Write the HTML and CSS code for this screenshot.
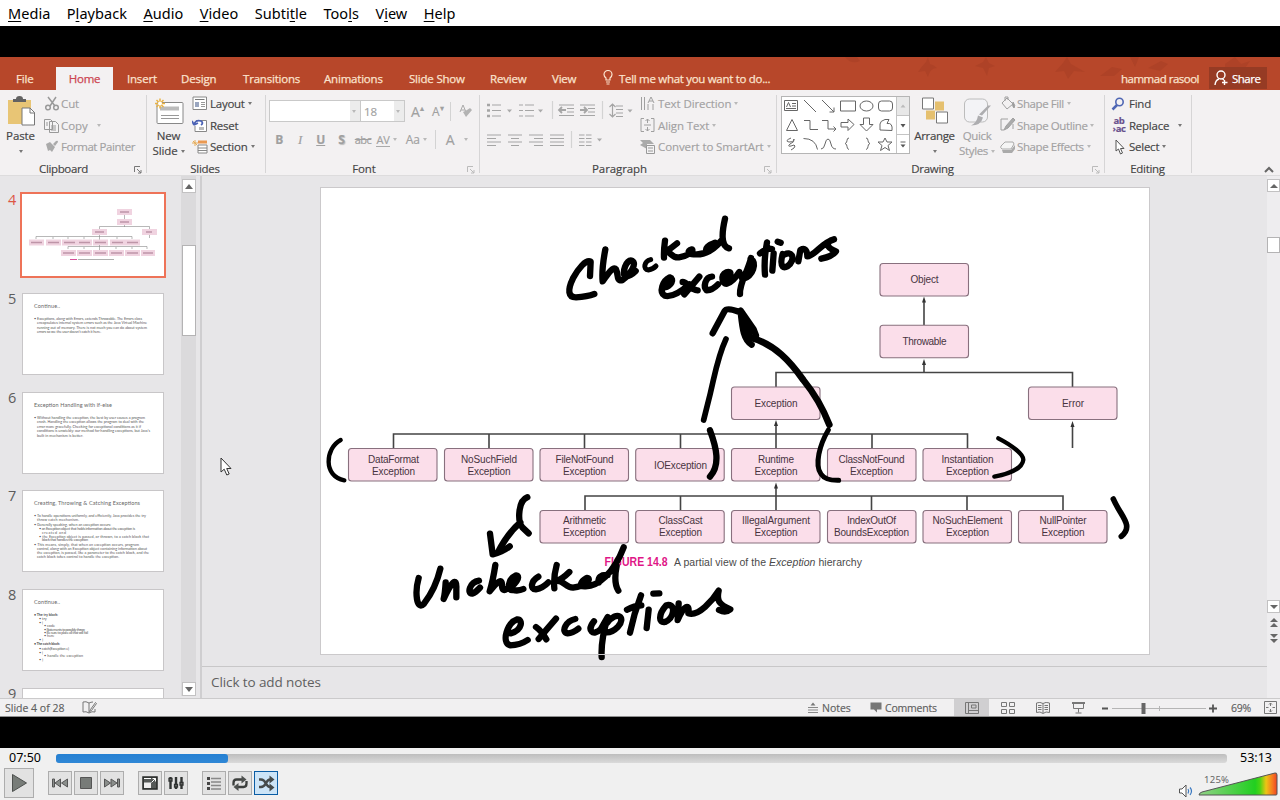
FILE: index.html
```html
<!DOCTYPE html>
<html lang="en">
<head>
<meta charset="utf-8">
<title>VLC media player</title>
<link rel="stylesheet" href="styles.css">
</head>
<body>
<nav class="menubar"><span><u>M</u>edia</span><span>P<u>l</u>ayback</span><span><u>A</u>udio</span><span><u>V</u>ideo</span><span>Subti<u>t</u>le</span><span>Too<u>l</u>s</span><span>V<u>i</u>ew</span><span><u>H</u>elp</span></nav>

<main class="video">
<header class="tabs">
  <svg class="leaves" width="560" height="33" viewBox="720 57 560 33"><g fill="#9f3b24" opacity=".4"><path d="M845 57q6 8 15 4l-3-4zM918 72q4-6 8-10l2-5 2 7q4 1 7 4-7 0-9 9l-3-6zM975 66l8-4 3-5 3 6 6 3-6 2-2 8-4-8zM1055 72l8-9 4-6 4 7 14 8-11-1-6 8-4-8zM1100 76l12-9 10 2-8 7zM1130 57l5 10 4-10zM1148 68l13-7 7 3-8 7zM1225 64l10-7 6 7 9-3-5 7-20 0z"/></g></svg>
  <span class="tab file">File</span><span class="tab home">Home</span><span class="tab t3">Insert</span><span class="tab t4">Design</span><span class="tab t5">Transitions</span><span class="tab t6">Animations</span><span class="tab t7">Slide Show</span><span class="tab t8">Review</span><span class="tab t9">View</span>
  <svg class="bulb" width="10" height="15" viewBox="0 0 10 15" fill="none" stroke="#fbe3ce" stroke-width="1.2"><path d="M3 10V8Q1 6.500 1 4.500A4 4 0 0 1 9 4.500Q9 6.500 7 8v2zM3 12h4M3.500 14h3"/></svg>
  <span class="tab tell">Tell me what you want to do...</span>
  <span class="tab user">hammad rasool</span>
  <span class="share"><svg width="15" height="16" viewBox="0 0 15 16" fill="none" stroke="#fff" stroke-width="1.400"><circle cx="7" cy="5" r="4"/><path d="M1 15Q1.500 10 5 9M8.500 9l1.500 1M10.500 10v5M8 12.500h5.500"/></svg><span>Share</span></span>
</header>

<section class="ribbon">
  <div class="group g-clip">
    <div class="body">
      <div class="big b-paste"><svg width="28" height="33" viewBox="8 95 28 33"><path d="M9 100h23v24H9z" fill="#e8c575"/><path d="M14 102v-3h3q0-3 3.500-3t3.500 3h3v3z" fill="#626262"/><path d="M23 108h8l4.500 4.500V125H23z" fill="#fff" stroke="#777"/><path d="M31 108v5h5" fill="none" stroke="#777"/></svg><span>Paste</span><i class="dd"></i></div>
      <div class="cmds off">
        <p><svg width="17" height="15" viewBox="0 0 17 15" fill="none" stroke="#999" stroke-width="1.500"><path d="M4 1l7 9M12 1L6 10"/><circle cx="4" cy="11.500" r="2.300"/><circle cx="12" cy="11.500" r="2.300"/></svg><span>Cut</span></p>
        <p><svg width="17" height="15" viewBox="0 0 17 15" fill="#f4f3f4" stroke="#999"><path d="M.5 1.500h6l2 2v8h-8zM5.500 3.500h6l3 3v8h-9zM7 8h5M7 10h5M7 12h5M2 5h2M2 7h2"/></svg><span>Copy</span><i class="dd gap9"></i></p>
        <p><svg width="17" height="15" viewBox="0 0 17 15"><path d="M2 5l4-2 5 5-3 5-2-2-2 1zM9 5l3-3q2-1 2 1l-3 4z" fill="#aaa"/></svg><span class="painter">Format Painter</span></p>
      </div>
    </div>
    <div class="caption"><span>Clipboard</span></div>
    <svg class="launch" width="8" height="8" viewBox="0 0 8 8"><path d="M.5 6V.5H6M3 3l4 4M7 4v3H4" fill="none" stroke="#777"/></svg>
  </div>
  <div class="group g-slides">
    <div class="body">
      <div class="big b-new"><svg width="30" height="28" viewBox="154 95 30 28"><rect x="157" y="100" width="26" height="21" rx="1" fill="#fff" stroke="#888"/><path d="M160 104h19v4h-19z" fill="#bbb"/><path d="M161 113h18M161 116h18" stroke="#999"/><path d="M160 96v10M155 101h10M156.500 97.500l7 7M163.500 97.500l-7 7" stroke="#e9b243" stroke-width="1.500"/><circle cx="160" cy="101" r="2" fill="#fff"/></svg><span>New</span><span>Slide<i class="dd"></i></span></div>
      <div class="cmds">
        <p><svg width="16" height="15" viewBox="0 0 16 15"><path d="M1 1h13.500v12.500H1z" fill="#fff" stroke="#888"/><path d="M3 3.500h9.500" stroke="#777"/><path d="M3 6h4v5H3z" fill="#9aa6c0"/><path d="M9 6.500h4M9 8.500h4M9 10.500h4" stroke="#999"/></svg><span>Layout</span><i class="dd"></i></p>
        <p><svg width="16" height="15" viewBox="0 0 16 15"><path d="M4 2.500h10.500v11H3V8" fill="#fff" stroke="#888"/><path d="M2 7Q3 1.500 9 3q3 2 0 4M2 7L0 3M2 7l4-2" fill="none" stroke="#4b62b5" stroke-width="1.700"/><path d="M7 9h5v3H7z" fill="#bbb"/></svg><span>Reset</span></p>
        <p><svg width="16" height="15" viewBox="0 0 16 15"><path d="M6 1.500h9v3H6z" fill="#ea9952"/><path d="M6 6h9v8H6zM6 9h9M6 11.500h9" fill="#fff" stroke="#888"/><path d="M3 1v6M0 4h6M1 2l4 4" stroke="#e5ac58"/></svg><span>Section</span><i class="dd"></i></p>
      </div>
    </div>
    <div class="caption"><span>Slides</span></div>
  </div>
  <div class="group g-font">
    <div class="fontrow first"><span class="combo name"><i class="dd"></i></span><span class="combo size">18<i class="dd"></i></span><span class="grow">A<sup>▴</sup></span><span class="grow small">A<sup>▾</sup></span><i class="sep"></i><svg width="14" height="15" viewBox="0 0 14 15"><path d="M1 8L4 1l3 7M2 6h4" fill="none" stroke="#aaa"/><path d="M4 8l3 5 6-7-2-2-3 2z" fill="#b3b3b3"/></svg></div>
    <div class="fontrow second"><b>B</b><em>I</em><b><u>U</u></b><b class="shadow">S</b><s>abc</s><span class="av">AV</span><i class="dd"></i><span class="aa">Aa</span><i class="dd"></i><i class="sep"></i><span class="fa">A</span><i class="dd"></i></div>
    <div class="caption"><span>Font</span></div>
    <svg class="launch" width="8" height="8" viewBox="0 0 8 8"><path d="M.5 6V.5H6M3 3l4 4M7 4v3H4" fill="none" stroke="#bbb"/></svg>
  </div>
  <div class="group g-para">
    <div class="body">
      <svg class="paraicons" width="160" height="64" viewBox="480 93 160 64" fill="none" stroke="#a5a5a5" stroke-width="1.200">
        <path d="M487 105h3M487 110.500h3M487 116h3" stroke-width="2.400"/><path d="M492 105h9M492 110.500h9M492 116h9M525 105h9M525 110.500h9M525 116h9M519 105h4M519 110.500h4M519 116h4"/>
        <path d="M552.500 101v18M602.500 101v18M571.500 131v17" stroke="#d3d3d3"/>
        <path d="M559 105h15M567 108.500h7M567 112h7M559 115.500h15M580 105h15M588 108.500h7M588 112h7M580 115.500h15" /><path d="M559 110h7M562 107l-3 3 3 3M580 110h7M584 107l3 3-3 3" stroke-width="1.800"/>
        <path d="M612.500 105v12M609.500 107l3-3 3 3M609.500 114l3 3 3-3M616 106h7M616 109.500h7M616 113h7M616 116.500h7"/>
        <path d="M487 135h14M487 138.500h9M487 142h14M487 145.500h9M508 135h14M511 138.500h8M508 142h14M511 145.500h8M529 135h14M534 138.500h9M529 142h14M534 145.500h9M550 135h14M550 138.500h14M550 142h14M550 145.500h14"/>
        <path d="M579 135h5.500M586 135h5.500M579 138.500h5.500M586 138.500h5.500M579 142h5.500M586 142h5.500M579 145.500h5.500M586 145.500h5.500"/>
        <path d="M507 109.500h5l-2.500 3zM538 109.500h5l-2.500 3zM627.500 109.500h5l-2.500 3zM597 138.500h5l-2.500 3z" fill="#aaa" stroke="none"/>
      </svg>
      <div class="cmds off">
        <p><svg width="16" height="16" viewBox="0 0 16 16" fill="none" stroke="#a0a0a0"><path d="M1.500 1v13M4.500 1v13M8 8v6M13 8v6M8 7l3-6 3 6M9 5h4"/></svg><span>Text Direction</span><i class="dd"></i></p>
        <p><svg width="16" height="16" viewBox="0 0 16 16" fill="none" stroke="#a0a0a0"><path d="M4 1.500H1v13h3M11 1.500h3v13h-3M7.500 2v4M5.500 4l2-2 2 2M7.500 14v-4M5.500 12l2 2 2-2M4 8h7"/></svg><span>Align Text</span><i class="dd"></i></p>
        <p><svg width="16" height="16" viewBox="0 0 16 16"><path d="M0 1h10l4 4H7v5L0 6l3-2z" fill="#aaa"/><path d="M6.500 6.500h8v8h-8zM8 9h5M8 12h5" fill="#f4f3f4" stroke="#999"/></svg><span>Convert to SmartArt</span><i class="dd"></i></p>
      </div>
    </div>
    <div class="caption"><span>Paragraph</span></div>
    <svg class="launch" width="8" height="8" viewBox="0 0 8 8"><path d="M.5 6V.5H6M3 3l4 4M7 4v3H4" fill="none" stroke="#bbb"/></svg>
  </div>
  <div class="group g-draw">
    <div class="body">
      <svg class="gallery" width="130" height="60" viewBox="780 95 130 60" fill="none" stroke="#666">
        <rect x="781.500" y="96.500" width="128" height="57" fill="#fff" stroke="#b5b5b5"/><path d="M896 97h13v19h-13z" fill="#e8e8e8" stroke="none"/><path d="M896.500 97v56M896 115.500h13M896 134.500h13" stroke="#c4c4c4"/>
        <path d="M784.500 100.500h13v10h-13zM792 103.500h4M792 106h4M786 108.500h10M786.500 107l2-4.500 2 4.500M804 100l12 12M822 100l12 12M834 107.500v4.500h-4.500M840.500 101h15v10h-15z"/><ellipse cx="866.500" cy="106" rx="6.500" ry="5"/><rect x="878.500" y="101" width="14" height="10" rx="3"/>
        <path d="M792 119.500l5.500 11h-11zM804 120.500h6v9h8M822 120.500h6v8.500h8M833.500 126.500l2.500 2.500-2.500 2.500M841 122.500h7v-3.500l6 5.500-6 6v-3.500h-7zM863.500 118h6v6.500h3.500l-6.500 6.500-6.500-6.500h3.500zM880 130v-6q0-3 5-4.500h4l-2 4q6-1 5 7z"/>
        <path d="M791 138q-7 3-2 4 5 0 5-3 1 3-4 5-3 3 1 2 4-2 4 0 0 2-4 4M803.500 138.500q12 0 14 11M821 149q3 0 4-5t3-5 3 5 5 5M849 138q-2 0-2 2.500t-2 3q2 .5 2 3t2 3M866 138q2 0 2 2.500t2 3q-2 .5-2 3t-2 3M885 138l2 4h5l-4 3.500 1.500 5-4.500-3-4.500 3 1.500-5-4-3.500h5z"/>
        <path d="M900.500 107.500h5l-2.500-3z" fill="#bbb" stroke="none"/><path d="M900.500 124h5l-2.500 3.500zM900.500 144.500h5l-2.500 3z" fill="#555" stroke="none"/><path d="M900.500 142h5"/>
      </svg>
      <div class="big b-arr"><svg width="28" height="30" viewBox="920 96 28 30"><path d="M934 101h9v9h-9zM925 110h9v9h-9z" fill="#e5c06f"/><path d="M921.500 97.500h11v11h-11zM935.500 111.500h11v11h-11z" fill="#fff" stroke="#777"/></svg><span>Arrange</span><i class="dd"></i></div>
      <div class="big b-quick off"><svg width="30" height="30" viewBox="963 96 30 30"><rect x="965.500" y="98.500" width="23" height="23" rx="5" fill="#f3f3f6" stroke="#bcbcbc"/><path d="M992 105l-9 10-3-1 9-9zM979 115l5 2q-2 8-12 8 6-3 7-10z" fill="#adadb0"/></svg><span>Quick</span><span>Styles<i class="dd"></i></span></div>
      <div class="cmds off">
        <p><svg width="16" height="16" viewBox="0 0 16 16" fill="none" stroke="#a0a0a0"><path d="M2 7l5-5 6 6-6 5zM5 5V1h3v3"/><path d="M13 6q3 4 1 6-2-1-1-6" fill="#999"/></svg><span>Shape Fill</span><i class="dd"></i></p>
        <p><svg width="16" height="16" viewBox="0 0 16 16" fill="none" stroke="#a0a0a0"><path d="M8 2H1v11h3M13 7v5"/><path d="M13 1l2 2-7 8-4 2 2-4z" fill="#aaa"/></svg><span>Shape Outline</span><i class="dd"></i></p>
        <p><svg width="16" height="16" viewBox="0 0 16 16"><path d="M5 3h8l1 2-3 5H2q-2-1-1-3z" fill="#f5f5f5" stroke="#aaa"/><path d="M2 11h9l4-5v4l-3 4H3z" fill="#aaa"/></svg><span>Shape Effects</span><i class="dd"></i></p>
      </div>
    </div>
    <div class="caption"><span>Drawing</span></div>
    <svg class="launch" width="8" height="8" viewBox="0 0 8 8"><path d="M.5 6V.5H6M3 3l4 4M7 4v3H4" fill="none" stroke="#bbb"/></svg>
  </div>
  <div class="group g-edit">
    <div class="body"><div class="cmds">
      <p><svg width="16" height="14" viewBox="0 0 16 14" fill="none" stroke="#4f66b4" stroke-width="1.600"><circle cx="8.500" cy="5" r="3.700"/><path d="M6 8l-4.500 4.500" stroke-width="2.500"/></svg><span>Find</span></p>
      <p><span class="abac">ab<br>›ac</span><span>Replace</span><i class="dd gap9"></i></p>
      <p><svg width="16" height="16" viewBox="0 0 16 16"><path d="M5 1v11l2.500-2L9.500 15l2-1-2-4.500H13z" fill="#fff" stroke="#555"/></svg><span>Select</span><i class="dd"></i></p>
    </div></div>
    <div class="caption"><span>Editing</span></div>
  </div>
  <svg class="collapse" width="10" height="7" viewBox="0 0 10 7"><path d="M1 6l4-4 4 4" fill="none" stroke="#666" stroke-width="2"/></svg>
</section>

<section class="work">
  <aside class="thumbs">
    <div class="item cur"><span class="num">4</span><svg class="thumb" width="142" height="82" viewBox="0 0 142 82">
      <g fill="#f0d3e0"><path d="M95 15h15v6H95zM95 25h15v6H95zM70 35h15v6H70zM120 35h15v6h-15zM7 45.500h15v6H7zM24 45.500h15v6H24zM40 45.500h15v6H40zM55 45.500h15v6H55zM71 45.500h15v6H71zM88 45.500h15v6H88zM103 45.500h15v6h-15zM39 56h15v6H39zM55 56h15v6H55zM71 56h15v6H71zM87 56h15v6H87zM103 56h15v6h-15zM119 56h14v6h-14z"/></g>
      <path d="M102.500 21v4M102.500 31v2M77.500 35v-2.500h50V35M77.500 41v4.500M14 45v-2.500h96V45M77.500 51v5M46 55v-2.500h79V55M31 43v2M46 43v2M62 43v2M95 43v2M62 53v2M94 53v2M110 53v2M127.500 41v3" fill="none" stroke="#888" stroke-width=".6"/>
      <path d="M98 18h9M98 28h9M73 38h9M124 38h6M9 48.500h11M26 48.500h11M42 48.500h11M57 48.500h11M73 48.500h11M90 48.500h11M105 48.500h11M41 59h11M57 59h11M73 59h11M89 59h11M105 59h11M121 59h10" stroke="#8d5871" stroke-width="1.300" opacity=".5"/><path d="M48 65.500h7" stroke="#d64e99"/><path d="M56 65.500h36" stroke="#999" stroke-width=".8"/></svg></div>
    <div class="item"><span class="num">5</span><svg class="thumb" width="142" height="82" viewBox="0 0 142 82"><text class="tt" x="12" y="15" textLength="26">Continue..</text><g class="tb"><text x="12" y="26.500" textLength="108">• Exceptions, along with Errors, extends Throwable. The Errors class</text><text x="15" y="31" textLength="110">encapsulates internal system errors such as the Java Virtual Machine</text><text x="15" y="35.500" textLength="110">running out of memory. There is not much you can do about system</text><text x="15" y="40" textLength="64">errors so we the user doesn't catch it here.</text></g></svg></div>
    <div class="item"><span class="num">6</span><svg class="thumb" width="142" height="82" viewBox="0 0 142 82"><text class="tt" x="12" y="15" textLength="78">Exception Handling with if-else</text><g class="tb"><text x="12" y="26.500" textLength="111">• Without handling the exception, the best by user causes a program</text><text x="15" y="31" textLength="107">crash. Handling the exception allows the program to deal with the</text><text x="15" y="35.500" textLength="104">error more gracefully. Checking for exceptional conditions as it if</text><text x="15" y="40" textLength="113">conditions is unwieldy: our method for handling exceptions, but Java's</text><text x="15" y="44.500" textLength="46">built in mechanism is better.</text></g></svg></div>
    <div class="item"><span class="num">7</span><svg class="thumb" width="142" height="82" viewBox="0 0 142 82"><text class="tt" x="12" y="15" textLength="106">Creating, Throwing &amp; Catching Exceptions</text><g class="tb"><text x="12" y="26.500" textLength="112">• To handle operations uniformly, and efficiently, Java provides the try</text><text x="15" y="30.500" textLength="42">throw catch mechanism.</text><text x="12" y="36" textLength="77">• Generally speaking, when an exception occurs:</text><text x="17" y="40" textLength="96">• an Exception object that holds information about the exception is</text><text x="20" y="44" textLength="24">created and</text><text x="17" y="47.500" textLength="110">• the Exception object is passed, or thrown, to a catch block that</text><text x="20" y="51" textLength="46">block that handles the exception</text><text x="12" y="56" textLength="105">• This means, simply, that when an exception occurs, program</text><text x="15" y="60" textLength="110">control, along with an Exception object containing information about</text><text x="15" y="64" textLength="112">the exception, is passed, like a parameter to the catch block, and the</text><text x="15" y="68" textLength="82">catch block takes control to handle the exception.</text></g></svg></div>
    <div class="item"><span class="num">8</span><svg class="thumb" width="142" height="82" viewBox="0 0 142 82"><text class="tt" x="12" y="15" textLength="26">Continue..</text><g class="tb"><text x="12" y="27" textLength="24" font-weight="bold">• The try block:</text><text x="17" y="30.500">• try</text><text x="17" y="34.500">• {</text><text x="22" y="38">• code</text><text x="22" y="41.500" textLength="41">• Statements to possibly throw</text><text x="22" y="45" textLength="44">• Be sure to place all that will fail</text><text x="22" y="48">• here</text><text x="17" y="51.500">• }</text><text x="12" y="56" textLength="26" font-weight="bold">• The catch block:</text><text x="17" y="61" textLength="30">• catch(Exception e)</text><text x="17" y="64.500">• {</text><text x="22" y="68" textLength="39">• handle the exception</text><text x="17" y="72">• }</text></g></svg></div>
    <div class="item"><span class="num">9</span><svg class="thumb" width="142" height="82" viewBox="0 0 142 82"></svg></div>
  </aside>
  <div class="scroll left"><span class="sb"><svg width="8" height="5" viewBox="0 0 8 5"><path d="M0 5l4-5 4 5z" fill="#666"/></svg></span><span class="handle"></span><span class="sb"><svg width="8" height="5" viewBox="0 0 8 5"><path d="M0 0l4 5 4-5z" fill="#666"/></svg></span></div>
  <div class="editor">
    <div class="canvas">
      <svg class="pointer" width="12" height="19" viewBox="0 0 12 19"><path d="M1 1v14l3.200-2.800L6.800 18l2.400-1-2.500-5.500H11z" fill="#fff" stroke="#333"/></svg>
      <svg class="slide" width="828" height="466" viewBox="321 188 828 466">
        <g fill="none" stroke="#444" stroke-width="1.600"><path d="M924 325v-24M924 372v-9M776 387v-14.500h296.500V387M776 449v-24M393.500 449v-15h574v15M489 449v-15M584.500 449v-15M680.500 449v-15M872 449v-15M1072.500 448v-22M776 511v-24M585 511v-15h478v15M680.500 511v-15M871.500 511v-15M967 511v-15"/></g>
        <path d="M924 296.500l-2 6h4zM924 359l-2 6h4zM776 420l-2 6h4zM1072.500 421l-2 6h4zM776 482.500l-2 6h4z" fill="#333"/>
        <g class="node"><rect x="880" y="263.500" width="88.500" height="32.500" rx="3"/><rect x="880" y="325.300" width="88.500" height="32.500" rx="3"/><rect x="731.500" y="387" width="88.500" height="32.500" rx="3"/><rect x="1028.500" y="387" width="88.500" height="32.500" rx="3"/>
        <rect x="348.500" y="448.500" width="88.500" height="32.500" rx="3"/><rect x="444.500" y="448.500" width="88.500" height="32.500" rx="3"/><rect x="540" y="448.500" width="88.500" height="32.500" rx="3"/><rect x="635.700" y="448.500" width="88.500" height="32.500" rx="3"/><rect x="731.500" y="448.500" width="88.500" height="32.500" rx="3"/><rect x="827.500" y="448.500" width="88.500" height="32.500" rx="3"/><rect x="923" y="448.500" width="88.500" height="32.500" rx="3"/>
        <rect x="540" y="510.500" width="88.500" height="32.500" rx="3"/><rect x="635.700" y="510.500" width="88.500" height="32.500" rx="3"/><rect x="731.500" y="510.500" width="88.500" height="32.500" rx="3"/><rect x="827.500" y="510.500" width="88.500" height="32.500" rx="3"/><rect x="923" y="510.500" width="88.500" height="32.500" rx="3"/><rect x="1018.500" y="510.500" width="88.500" height="32.500" rx="3"/></g>
        <g class="label"><text x="924.500" y="283" textLength="28">Object</text><text x="924.500" y="345" textLength="44">Throwable</text><text x="776" y="406.500" textLength="43">Exception</text><text x="1073" y="406.500" textLength="22">Error</text>
        <text x="393.500" y="463" textLength="51">DataFormat</text><text x="393.500" y="474.500" textLength="43">Exception</text><text x="489" y="463" textLength="56">NoSuchField</text><text x="489" y="474.500" textLength="43">Exception</text><text x="584.500" y="463" textLength="58">FileNotFound</text><text x="584.500" y="474.500" textLength="43">Exception</text><text x="680.500" y="468.500" textLength="53">IOException</text><text x="776" y="463" textLength="36">Runtime</text><text x="776" y="474.500" textLength="43">Exception</text><text x="871.500" y="463" textLength="66">ClassNotFound</text><text x="871.500" y="474.500" textLength="43">Exception</text><text x="967.500" y="463" textLength="52">Instantiation</text><text x="967.500" y="474.500" textLength="43">Exception</text>
        <text x="584.500" y="524" textLength="43">Arithmetic</text><text x="584.500" y="535.500" textLength="43">Exception</text><text x="680.500" y="524" textLength="44">ClassCast</text><text x="680.500" y="535.500" textLength="43">Exception</text><text x="776" y="524" textLength="68">IllegalArgument</text><text x="776" y="535.500" textLength="43">Exception</text><text x="871.500" y="524" textLength="49">IndexOutOf</text><text x="871.500" y="535.500" textLength="75">BoundsException</text><text x="967.500" y="524" textLength="70">NoSuchElement</text><text x="967.500" y="535.500" textLength="43">Exception</text><text x="1063" y="524" textLength="47">NullPointer</text><text x="1063" y="535.500" textLength="43">Exception</text></g>
        <text class="fig" x="604.500" y="566" textLength="63" lengthAdjust="spacingAndGlyphs">FIGURE 14.8</text><text class="cap" x="674" y="565.500" textLength="188">A partial view of the <tspan font-style="italic">Exception</tspan> hierarchy</text>
        <g class="ink" transform="translate(540 190) scale(.33333)">
          <path d="M150 258L152 215C138 208 115 235 99 265C82 300 84 322 108 322Q142 320 163 312"/>
          <path d="M196 178C189 215 185 245 188 274C199 260 218 226 228 238C236 254 228 272 246 271C270 255 292 222 276 212C259 206 244 250 257 260Q272 258 287 243"/>
          <path stroke-width="15" d="M332 209C312 214 308 239 325 240Q340 237 348 228"/>
          <path d="M375 152Q371 180 372 203M411 160Q394 174 379 184C392 186 397 205 417 202C442 199 462 184 456 178C438 183 447 194 463 193Q508 197 545 151M525 158Q492 170 500 184M555 86Q547 120 548 142Q549 170 567 175"/>
          <path d="M374 292C393 289 405 267 389 262C368 272 356 306 374 317C400 324 431 298 448 283M428 276C442 276 449 300 473 301M478 260L433 313M516 260C495 262 489 291 500 301Q518 300 534 283M552 266C577 258 576 242 559 247C540 256 547 284 561 281Q581 273 598 246L606 263M633 204C622 250 598 278 600 312M632 206C650 219 642 256 607 268"/>
          <path d="M681 157Q671 210 675 254M660 190Q680 173 696 177M701 190L697 242M713 155L722 158M728 192C717 233 732 241 750 222C767 199 751 183 735 193M775 214L781 180Q801 169 802 199C824 199 844 158 882 148C858 154 855 171 888 184Q878 199 844 206"/>
          <path d="M518 430L554 363Q561 350 604 368L641 418L648 436M602 362L641 418M602 367C607 412 610 450 635 464M609 390L628 430"/>
          <path stroke-width="17" d="M558 447C533 500 525 552 511 610L491 690"/><path stroke-width="20" d="M622 440C705 459 755 520 790 570Q839 630 868 704"/>
        </g>
        <g class="ink" transform="translate(320 420) scale(.33333)">
          <path stroke-width="13" d="M62 60C15 85 9 170 73 181"/><path d="M1170 31C1189 82 1202 134 1170 170M622 232C594 242 592 304 607 322L626 340M601 307Q562 341 533 398M510 341L518 403Q550 395 569 379"/>
          <path d="M296 474C284 516 289 574 312 551Q347 505 361 446M377 487Q375 520 371 537C393 487 411 468 409 505L409 532M477 482C448 487 441 521 456 521Q468 517 480 503M526 435Q519 482 509 514C532 485 548 471 546 499Q548 516 560 507C585 497 605 468 588 466C562 478 561 512 578 510Q596 514 610 507M655 470C631 484 631 508 647 508Q669 504 685 487M710 435Q700 471 703 505M748 456Q726 478 710 482C733 483 737 502 759 503C797 498 818 477 800 474C782 484 775 501 796 499C833 500 881 461 911 382M863 465Q832 463 836 488M890 438Q880 488 895 512"/>
          <path stroke-width="19" d="M572 640C609 631 608 597 592 598C562 608 543 667 570 676Q601 675 623 660M648 621Q664 632 679 658M708 596Q682 626 656 657M766 597C738 602 721 637 743 640Q758 639 775 626M822 604C799 633 820 649 842 628L863 591Q842 663 845 711M861 609C892 569 919 593 894 620Q872 642 852 636M963 526Q942 580 930 638M921 569Q943 557 964 556M986 569L980 624M1000 521L1018 520M1038 557C1015 583 1015 610 1035 606C1063 594 1067 554 1045 555M1076 550L1073 600C1093 553 1110 550 1105 580C1135 591 1179 540 1196 512C1190 540 1194 552 1231 568Q1217 580 1197 570"/>
        </g>
        <g class="ink" transform="translate(720 250) scale(.33333)"><path stroke-width="15" d="M325 540C300 582 282 645 303 672Q316 692 356 691"/><path stroke-width="13" d="M835 565C878 587 910 613 910 629C907 655 867 672 823 680"/><path stroke-width="17" d="M1180 747C1202 799 1243 827 1204 859"/></g>
      </svg>
    </div>
    <div class="notes">Click to add notes</div>
  </div>
  <div class="scroll right"><span class="sb"><svg width="8" height="4" viewBox="0 0 8 4"><path d="M0 4l4-4 4 4z" fill="#666"/></svg></span><span class="handle"></span><span class="sb d"><svg width="8" height="4" viewBox="0 0 8 4"><path d="M0 0l4 4 4-4z" fill="#666"/></svg></span><svg class="jump" width="8" height="26" viewBox="0 0 8 26" fill="#666"><path d="M0 4l4-4 4 4zM0 9l4-4 4 4zM0 16l4 4 4-4zM0 21l4 4 4-4z"/></svg></div>
</section>

<footer class="status">
  <span class="count">Slide 4 of 28</span>
  <svg width="15" height="13" viewBox="0 0 15 13" fill="none" stroke="#777"><path d="M7 2v10M7 2Q4 0 1 1v10q3-1 6 1M7 2q2-1 4-1M7 12q3-2 6-1V8M13.500 1.500l-5 7-1 2 2-1 5-7z"/></svg>
  <span class="right">
    <svg class="s1" width="12" height="11" viewBox="0 0 12 11"><path d="M3.500 3.500h5L6 .5z" fill="#777"/><path d="M1 5.500h10M1 8h10M1 10.500h10" stroke="#888"/></svg><span class="notesb">Notes</span>
    <svg class="s2" width="12" height="11" viewBox="0 0 12 11"><path d="M.5.500h11v7H7v3L4 7.500H.5z" fill="#777"/></svg><span class="comm">Comments</span>
    <span class="norm"><svg width="14" height="12" viewBox="0 0 14 12" fill="none" stroke="#777"><path d="M.5.500h13v11H.5zM3.500 1v10M6.500 3h4.500v3H6.500zM4 8.500h9"/></svg></span>
    <svg class="s3" width="14" height="12" viewBox="0 0 14 12" fill="none" stroke="#777"><path d="M.5.500h5v4h-5zM8.500.500h5v4h-5zM.5 7.500h5v4h-5zM8.500 7.500h5v4h-5z"/></svg>
    <svg class="s4" width="14" height="12" viewBox="0 0 14 12" fill="none" stroke="#777"><path d="M7 1.500Q4-.5.500 1v9.500Q4 9 7 11.500 10 9 13.500 10.500V1Q10-.5 7 1.500zV11M2 3.500h3.500M2 5.500h3.500M2 7.500h3.500M8.500 3.500H12M8.500 5.500H12M8.500 7.500H12"/></svg>
    <svg class="s5" width="13" height="12" viewBox="0 0 13 12" fill="none" stroke="#777"><path d="M0 1h13" stroke-width="2"/><path d="M1.500 2v4.500h10V2M6.500 6.500v4M3.500 11h6"/></svg>
    <svg class="s6" width="118" height="14" viewBox="1101 701 118 14"><path d="M1102 708.500h6M1209 708.500h8M1213 704.500v8" stroke="#555" stroke-width="1.800"/><path d="M1112 708.500h94M1159.500 706v5" stroke="#b5b5b5"/><path d="M1141.500 703h4v11h-4z" fill="#666"/></svg>
    <span class="pct">69%</span>
    <svg class="s7" width="13" height="13" viewBox="0 0 13 13" fill="none" stroke="#777"><path d="M.5.500h12v12H.5zM6.500 2v3M5 3.500L6.500 2 8 3.500M6.500 11V8M5 9.500L6.500 11 8 9.500M2 6.500h2.500M11 6.500H8.500"/></svg>
  </span>
</footer>
</main>

<section class="player">
  <div class="seekrow"><time>07:50</time><div class="seek"><div class="played"></div></div><time>53:13</time></div>
  <div class="controls">
    <span class="btn play"><svg width="28" height="28" viewBox="0 0 28 28"><path d="M7.500 5.500l14 8.500-14 8.500z" fill="#777c78" stroke="#4d504e"/></svg></span>
    <span class="btn"><svg width="22" height="22" viewBox="0 0 22 22" fill="#8a8e8b" stroke="#555"><path d="M3.500 7h2v8h-2zM11.500 7v8L6 11zM18.500 7v8L12.500 11z"/></svg></span>
    <span class="btn"><svg width="22" height="22" viewBox="0 0 22 22"><path d="M5.500 5.500h11v11h-11z" fill="#777b78" stroke="#555"/></svg></span>
    <span class="btn"><svg width="22" height="22" viewBox="0 0 22 22" fill="#8a8e8b" stroke="#555"><path d="M16.500 7h2v8h-2zM3.500 7v8L9.500 11zM10 7v8l6-4z"/></svg></span>
    <span class="btn full"><svg width="22" height="22" viewBox="0 0 22 22"><path d="M4 5h14v12H4z" fill="#555957" stroke="#272a29" stroke-width="1.500"/><path d="M5 10.500h7v5.500H5z" fill="#eee"/><path d="M5 6.500h7M12.500 10.500l4-4M13.500 6.500h3v3" stroke="#fff" fill="none"/></svg></span>
    <span class="btn"><svg width="22" height="22" viewBox="0 0 22 22" fill="#777" stroke="#303332" stroke-width="1.300"><path d="M5.500 5v12M11 5v12M16.500 5v12" stroke-width="2.400"/><path d="M4 6.500h3v2.500H4zM9.500 12.500h3V15h-3zM15 10.500h3V13h-3z"/></svg></span>
    <span class="btn list"><svg width="22" height="22" viewBox="0 0 22 22"><path d="M4 5h3v3H4zM4 10h3v3H4zM4 15h3v3H4z" fill="#444"/><path d="M8 6.500h10M8 10h10M8 13.500h10M8 17h10" stroke="#888" stroke-width="1.500"/></svg></span>
    <span class="btn"><svg width="22" height="22" viewBox="0 0 22 22" fill="none" stroke="#3c3f3d" stroke-width="2.300"><path d="M4.500 13.500V11q0-3.500 3-3.500h6M17.500 9v2.500q0 3.500-3 3.500H9"/><path d="M12.500 3.500l5 4-5 4zM9.500 11l-5 4 5 4z" fill="#4d504e" stroke="none"/></svg></span>
    <span class="btn on"><svg width="22" height="22" viewBox="0 0 22 22" fill="none" stroke="#464b4b" stroke-width="2.500"><path d="M4 7.500h2q3 0 5 4t5 3.500M4 15h2q3 0 5-4t5-3.500"/><path d="M14.500 3.500l5 4-5 4zM14.500 11.500l5 4-5 4z" fill="#464b4b" stroke="none"/></svg></span>
    <svg class="speaker" width="16" height="16" viewBox="0 0 16 16" fill="none"><path d="M1.500 6v4h2.500l4 4V2L4 6z" fill="#fff" stroke="#555"/><path d="M10 6q1.500 2 0 4.500M12 4.500q3 3.500 0 7.500" stroke="#3978c1" stroke-width="1.200"/></svg>
    <svg class="vol" width="81" height="26" viewBox="0 0 81 26"><defs><linearGradient id="vg"><stop offset="0" stop-color="#91d187"/><stop offset=".72" stop-color="#21cf20"/><stop offset=".78" stop-color="#49d414"/><stop offset=".86" stop-color="#edc414"/><stop offset=".94" stop-color="#f77b20"/><stop offset="1" stop-color="#ee4323"/></linearGradient></defs><path d="M1 24Q1 22 4 21L77 2q2-.5 2 2v19q0 1-1 1z" fill="url(#vg)" stroke="#555"/><text x="6" y="12" textLength="25">125%</text></svg>
  </div>
</section>
</body>
</html>
```
FILE: styles.css
```css
* { box-sizing: border-box; }
body { margin: 0; width: 1280px; height: 800px; overflow: hidden; background: #000; font-family: "Open Sans", "Noto Sans", sans-serif; }
svg { display: block; flex: none; }
i { font-style: normal; }

.menubar { height: 26px; background: #fff; display: flex; align-items: center; padding-left: 8px; gap: 16.400px; font: 14.500px/26px "Noto Sans", sans-serif; color: #000; letter-spacing: .05px; }
.menubar u { text-underline-offset: 2px; }

.video { height: 722px; padding: 31px 0 32px; background: #000; }

.tabs { height: 33px; background: #b7472a; position: relative; display: flex; color: #fbe3ce; font-size: 11.5px; padding-top: 10px; line-height: 23px; letter-spacing: -.2px; -webkit-text-stroke: .25px; white-space: nowrap; }
.leaves { position: absolute; right: 0; top: 0; }
.tab { position: relative; }
.file { width: 56px; padding-left: 16px; }
.home { width: 57px; background: #f3f1f2; color: #cc4550; text-align: center; }
.t3 { width: 55px; padding-left: 14px; margin-right: 13px; }
.t4 { width: 62px; }
.t5 { width: 81px; }
.t6 { width: 85px; }
.t7 { width: 81px; }
.t8 { width: 62px; }
.t9 { width: 51px; }
.bulb { margin-top: 3px; }
.tell { margin-left: 6px; letter-spacing: -.3px; }
.user { margin-left: auto; margin-right: 10px; letter-spacing: -.5px; }
.share { position: relative; background: #963b24; width: 58px; height: 22px; margin-right: 13px; display: flex; align-items: center; padding-left: 5px; gap: 3px; color: #fff; letter-spacing: -.5px; }

.ribbon { height: 86px; background: #f3f1f2; display: flex; color: #444; font-size: 11.5px; border-bottom: 1px solid #dddcdd; position: relative; letter-spacing: -.1px; white-space: nowrap; -webkit-text-stroke: .15px; }
.group { position: relative; height: 86px; padding-top: 3px; }
.group::after { content: ""; position: absolute; right: 0; top: 5px; height: 78px; border-right: 1px solid #d6d5d6; }
.body { height: 65px; display: flex; }
.caption { height: 18px; line-height: 21px; text-align: center; }
.g-clip { width: 147px; } .g-slides { width: 119px; } .g-font { width: 214px; } .g-para { width: 297px; } .g-draw { width: 328px; } .g-edit { width: 87px; }
.g-clip .caption { padding-right: 20px; }
.g-slides .caption { padding-right: 3px; }
.g-font .caption { padding-right: 18px; }
.g-para .caption { padding-right: 18px; }
.g-draw .caption { padding-right: 17px; }
.g-clip .caption { letter-spacing: -.35px; }
.g-slides .caption, .g-draw .caption, .g-edit .caption { letter-spacing: -.3px; }
.g-edit .caption { padding-right: 2px; }
.launch { position: absolute; right: 5px; bottom: 2px; }
.big { display: flex; flex-direction: column; align-items: center; line-height: 15px; padding-top: 2px; }
.big > svg { height: 33px; }
.b-paste { width: 41px; margin-right: 3px; }
.b-new { width: 43px; margin-right: 2px; }
.b-arr { width: 47px; margin-left: -1px; letter-spacing: -.35px; }
.b-quick { width: 38px; margin-right: 4px; letter-spacing: -.35px; }
.off { color: #a2a1a2; }
.cmds { flex: none; }
.cmds p { margin: 0; height: 21.5px; display: flex; align-items: center; }
.cmds p > svg { margin-right: 2px; }
.g-clip .cmds p > svg { margin-right: 0; }
.g-draw .cmds { letter-spacing: -.4px; }
.g-draw .cmds p > svg { margin-right: 1px; }
.g-slides .cmds, .g-edit .cmds { letter-spacing: -.25px; }
.painter { letter-spacing: -.45px; }
.dd { display: inline-block; flex: none; width: 0; height: 0; border: 2.5px solid transparent; border-top: 3px solid #777; border-bottom: 0; margin-left: 3px; vertical-align: middle; }
.off .dd, .fontrow .dd { border-top-color: #b9b9b9; }
.b-paste > .dd, .b-arr > .dd { margin: 7px 0 0; }
.dd.gap9 { margin-left: 9px; }
.abac { width: 16px; margin-right: 2px; color: #68508d; font: bold 9.500px/8px "Open Sans", sans-serif; letter-spacing: -.4px; text-align: center; }
.g-edit .cmds { padding-left: 6px; }

.fontrow { display: flex; align-items: center; color: #a0a0a0; padding-left: 3px; }
.first { height: 36px; } .second { height: 21px; margin-bottom: 8px; font-size: 12px; }
.combo { height: 22px; border: 1px solid #c9c9c9; background: linear-gradient(to left, #ececec 10px, #fff 10px); display: flex; align-items: center; padding: 0 4px; }
.combo .dd { margin-left: auto; }
.combo.name { width: 92px; } .combo.size { width: 44px; border-left: 0; }
.combo.size { padding-left: 3px; }
.grow { font-size: 14px; margin-left: 6px; width: 15px; }
.grow.small { font-size: 12px; margin-left: 6px; width: 13px; }
.grow sup { font-size: 8px; line-height: 0; }
.sep { width: 1px; height: 19px; background: #d3d3d3; margin: 0 8px 0 5px; }
.second b, .second em { width: 20.7px; text-align: center; }
.second em { font-family: "Liberation Serif", serif; font-size: 13px; font-style: italic; }
.shadow { text-shadow: 1px 1px 1px #bbb; }
.second s { font-size: 11px; letter-spacing: -.5px; margin-left: 3px; margin-right: 5px; }
.av { font-size: 11px; border-bottom: 1px solid #aaa; line-height: 13px; }
.aa { margin-left: 9px; font-size: 12px; }
.fa { font-size: 14px; margin-right: 6px; }
.second .sep { margin-left: 8px; margin-right: 10px; }
.gallery { margin: 2px 2px 0 3px; }
.collapse { margin-left: auto; margin-right: 6px; margin-top: 76px; }

.work { height: 522px; display: flex; background: #e7e6e8; }
.thumbs { width: 181px; height: 522px; overflow: hidden; padding: 18px 0 0 8px; display: flex; flex-direction: column; gap: 16.750px; }
.item { height: 82px; flex: none; display: flex; }
.num { width: 14px; color: #5c5c5c; font-size: 14.500px; line-height: 11px; }
.cur .num { color: #dd5744; }
.thumb { background: #fff; outline: 1px solid #c8c6c8; outline-offset: -1px; }
.cur .thumb { outline: 2.500px solid #ee7358; outline-offset: 0; }
.tt { font: 5.500px "Lato", sans-serif; fill: #666; }
.tb { font: 3.700px "Lato", sans-serif; fill: #555; }
.scroll { display: flex; flex-direction: column; align-items: center; background: #dbdadc; }
.scroll .sb { background: #fff; border: 1px solid #c2c1c2; display: flex; align-items: center; justify-content: center; }
.handle { background: #fff; border: 1px solid #b4b3b4; }
.left { width: 15px; height: 520px; padding-top: 3px; }
.left .sb { width: 14px; height: 14px; }
.left .handle { width: 14px; height: 91px; margin: 52px 0 auto; }
.editor { flex: 1; border-left: 2px solid #cfced0; margin-left: 4px; }
.canvas { height: 490px; padding: 12px 0 0 119px; position: relative; }
.pointer { position: absolute; left: 18px; top: 281px; }
.slide { background: #fff; outline: 1px solid #cbc9cb; overflow: visible; position: relative; }
.node rect { fill: #fbdeea; stroke: #88707e; stroke-width: 1.100; }
.label { font: 10px "Liberation Sans", sans-serif; fill: #48343f; text-anchor: middle; }
.fig { font: bold 12.500px "Liberation Sans", sans-serif; fill: #df1687; }
.cap { font: 10.500px "Liberation Sans", sans-serif; fill: #4a4a4a; }
.ink { fill: none; stroke: #000; stroke-width: 19; stroke-linecap: round; stroke-linejoin: round; }
.notes { height: 32px; border-top: 1px solid #c8c7c8; font-size: 13.500px; line-height: 31px; color: #606060; padding-left: 9px; letter-spacing: -.1px; }
.right { width: 13px; height: 522px; padding-top: 3px; background: #eeedef; }
.right .sb { width: 13px; height: 13px; }
.right .handle { width: 13px; height: 16px; margin: 45px 0 347px; }
.right .jump { margin-top: 5px; }

.status { height: 19px; background: #f1f0f1; border-top: 1px solid #cbcacb; border-bottom: 1px solid #8f8f8f; display: flex; align-items: center; font-size: 10.500px; color: #5e5e5e; padding-left: 5px; white-space: nowrap; -webkit-text-stroke: .15px; }
.count { width: 77px; }
.right .sb, .jump { flex: none; }
.status .right { width: auto; height: 17px; padding: 0; background: none; display: flex; align-items: center; margin-left: auto; }
.notesb { width: 51px; padding-left: 3px; }
.comm { width: 72px; padding-left: 3px; letter-spacing: -.2px; }
.norm { width: 35px; height: 17px; background: #d0cfd1; display: flex; align-items: center; justify-content: center; }
.status .s3 { margin-left: 12px; } .status .s4 { margin-left: 21px; } .status .s5 { margin-left: 22px; } .status .s6 { margin-left: 16px; }
.pct { width: 33px; padding-left: 12px; letter-spacing: -.3px; }
.status .s7 { margin: 0 3px 0 12px; }

.player { height: 52px; background: #f0f0f0; }
.seekrow { height: 20px; padding: 0 6px 0 9px; display: flex; align-items: center; justify-content: space-between; }
.seekrow time { font: 12.500px/20px "Noto Sans", sans-serif; width: 34px; color: #000; white-space: nowrap; }
.seek { width: 1171px; height: 9px; margin: 0 13px; border-radius: 3px; background: linear-gradient(#bdbdbd, #dadada); }
.played { width: 172px; height: 9px; border-radius: 3px; background: linear-gradient(#2480d2, #2f87d6); }
.controls { height: 30px; display: flex; align-items: center; padding-left: 4px; }
.btn { width: 24px; height: 24px; margin-right: 2px; border: 1px solid #adadad; background: #e2e2e2; }
.play { width: 30px; height: 30px; margin-right: 14px; }
.full { margin-left: 12px; } .list { margin-left: 12px; }
.on { background: #cce4f7; border-color: #0a5ca4; }
.speaker { margin-left: auto; margin-right: 4px; margin-top: 15px; }
.vol { margin-right: 1px; margin-top: 2px; }
.vol text { font: 9.500px "Noto Sans", sans-serif; fill: #666; }
```
